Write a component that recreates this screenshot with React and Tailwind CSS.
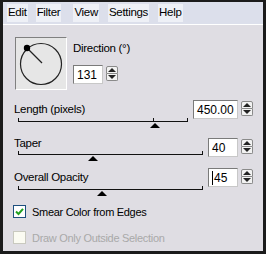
import React from "react";

const font = { fontFamily: '"Liberation Sans", Arial, sans-serif', letterSpacing: "-0.3px" };

function Spinner() {
  return (
    <div className="flex flex-col w-[12px] h-[15px] ml-[3px] mt-[1px]">
      <div className="flex-1 flex items-center justify-center border border-[#8a8a8a] rounded-t-[2px] bg-[#f2f2f2]">
        <div className="w-0 h-0 border-l-[4px] border-r-[4px] border-b-[4px] border-l-transparent border-r-transparent border-b-[#222]" />
      </div>
      <div className="flex-1 flex items-center justify-center border border-t-0 border-[#8a8a8a] rounded-b-[2px] bg-[#f2f2f2]">
        <div className="w-0 h-0 border-l-[4px] border-r-[4px] border-t-[4px] border-l-transparent border-r-transparent border-t-[#222]" />
      </div>
    </div>
  );
}

function NumBox({ value, w, caret, mt = 0 }) {
  return (
    <div className="flex items-start" style={{ marginTop: mt }}>
      <div
        className={`h-[19px] ${w} bg-white border border-t-[#7a7a7a] border-l-[#7a7a7a] border-r-[#c8c8c8] border-b-[#c8c8c8] flex items-center pl-[3px] text-[12px] text-black leading-none tracking-normal`}
      >
        {caret && <span className="w-px h-[14px] bg-black mr-px" />}
        {value}
      </div>
      <Spinner />
    </div>
  );
}

function Track({ width, thumb, tick, mt }) {
  return (
    <div className="relative h-[10px] ml-[4px]" style={{ width, marginTop: mt }}>
      <div className="absolute left-0 right-0 top-[3px] h-px bg-[#111]" />
      <div className="absolute left-0 top-0 w-px h-[4px] bg-[#111]" />
      <div className="absolute right-0 top-0 w-px h-[4px] bg-[#111]" />
      {tick != null && <div className="absolute top-0 w-px h-[4px] bg-[#111]" style={{ left: tick }} />}
      <div
        className="absolute top-[5px] w-0 h-0 border-l-[5px] border-r-[5px] border-b-[5px] border-l-transparent border-r-transparent border-b-black"
        style={{ left: thumb - 5 }}
      />
    </div>
  );
}

function SliderRow({ label, value, boxW, trackW, thumb, tick, caret, gapTop, labelTop, trackTop, boxTop }) {
  return (
    <div className="flex justify-between pr-[10px]" style={{ marginTop: gapTop }}>
      <div className="pl-[11px]">
        <div className="text-[11.5px] leading-[12px] text-black" style={{ marginTop: labelTop }}>
          {label}
        </div>
        <Track width={trackW} thumb={thumb} tick={tick} mt={trackTop} />
      </div>
      <NumBox value={value} w={boxW} caret={caret} mt={boxTop} />
    </div>
  );
}

function Check({ checked, disabled, label, mt }) {
  return (
    <div className="flex items-center pl-[10px]" style={{ marginTop: mt }}>
      <div
        className={`w-[13px] h-[13px] border flex items-center justify-center ${
          disabled ? "border-[#c9c9bf] bg-[#fbfbf2]" : "border-[#1d4f7e] bg-white"
        }`}
      >
        {checked && (
          <svg width="9" height="9" viewBox="0 0 9 9">
            <path d="M1 4.5 L3.5 7 L8 1.8" fill="none" stroke="#21a121" strokeWidth="2" />
          </svg>
        )}
      </div>
      <span className={`ml-[6px] text-[11px] leading-[12px] ${disabled ? "text-[#a9a9a9]" : "text-black"}`}>{label}</span>
    </div>
  );
}

export default function App() {
  return (
    <div className="w-[266px] h-[254px] bg-[#1b1b1b] pt-[2px] pl-[3px] pr-[3px] pb-[3px] flex flex-col" style={font}>
      <div className="h-[23px] bg-[#dcdfeb] border-b border-white flex items-center text-[11.5px] text-black">
        <span className="ml-[4px] px-px bg-[#eef0f6]">Edit</span>
        <span className="ml-[8px] px-px bg-[#eef0f6]">Filter</span>
        <span className="ml-[12px] px-px bg-[#eef0f6]">View</span>
        <span className="ml-[9px] px-px bg-[#eef0f6]">Settings</span>
        <span className="ml-[9px] px-px bg-[#eef0f6]">Help</span>
      </div>
      <div className="flex-1 bg-[#dfdde3]">
        <div className="flex mt-[12px] ml-[12px]">
          <div className="w-[52px] h-[53px] bg-[#e6e6e6] border border-t-[#808080] border-l-[#808080] border-r-white border-b-white">
            <svg width="50" height="51" viewBox="0 0 50 51">
              <circle cx="25" cy="26" r="20.5" fill="none" stroke="#222" strokeWidth="1.2" />
              <line x1="11" y1="10" x2="26" y2="25" stroke="#222" strokeWidth="1.2" />
              <circle cx="11" cy="10" r="3.2" fill="#000" />
            </svg>
          </div>
          <div className="ml-[6px]">
            <div className="text-[11.5px] leading-[12px] text-black mt-[5px]">Direction (°)</div>
            <div className="mt-[11px]">
              <NumBox value="131" w="w-[30px]" />
            </div>
          </div>
        </div>
        <SliderRow label="Length (pixels)" value="450.00" boxW="w-[45px]" trackW={170} thumb={137} tick={135} gapTop={10} labelTop={3} trackTop={3} boxTop={0} />
        <SliderRow label="Taper" value="40" boxW="w-[30px]" trackW={185} thumb={75} gapTop={9} labelTop={0} trackTop={2} boxTop={1} />
        <SliderRow label="Overall Opacity" value="45" boxW="w-[30px]" trackW={185} thumb={84} caret gapTop={7} labelTop={3} trackTop={3} boxTop={0} />
        <Check checked label="Smear Color from Edges" mt={9} />
        <Check disabled label="Draw Only Outside Selection" mt={13} />
      </div>
    </div>
  );
}
